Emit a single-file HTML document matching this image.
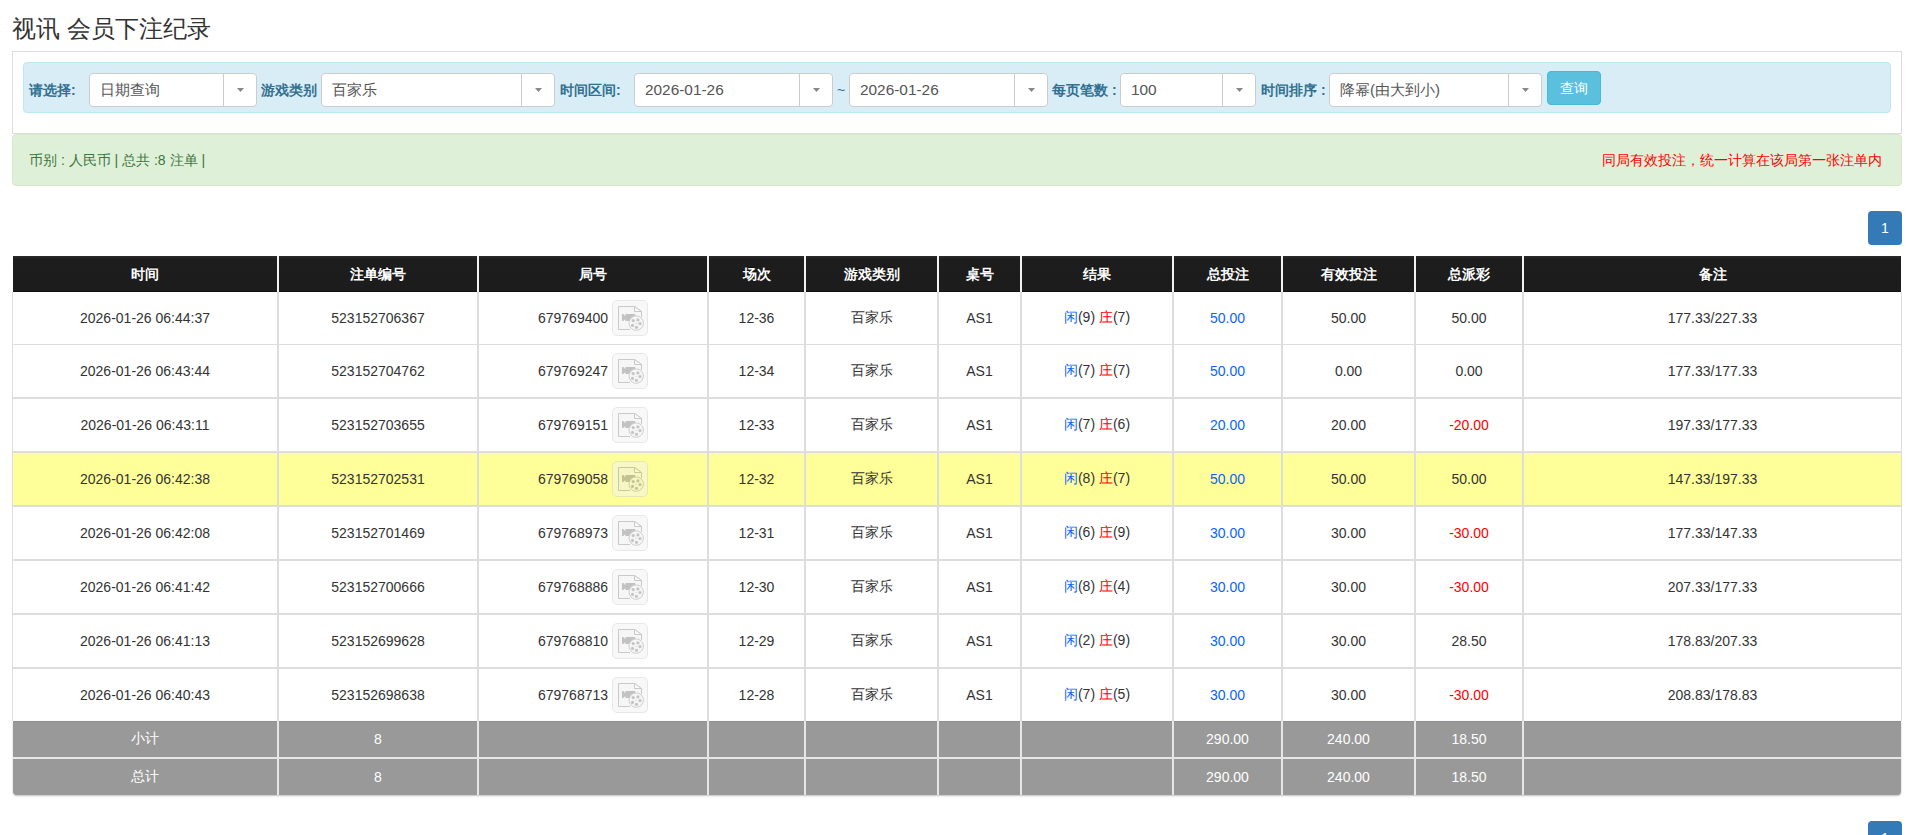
<!DOCTYPE html>
<html><head><meta charset="utf-8"><title>视讯 会员下注纪录</title>
<style>
*{box-sizing:border-box;margin:0;padding:0}
html,body{width:1911px;height:835px;overflow:hidden;background:#fff}
body{font-family:"Liberation Sans",sans-serif;color:#333;font-size:14px;position:relative}
.abs{position:absolute}
.title{left:12px;top:14px;font-size:24px;line-height:30px;color:#333;white-space:nowrap}
.panel{left:12px;top:51px;width:1890px;height:83px;border:1px solid #ddd}
.info{left:23px;top:62px;width:1868px;height:51px;background:#d9edf7;border:1px solid #bce8f1;border-radius:4px}
.lbl{top:80px;font-size:14px;line-height:20px;font-weight:bold;color:#31708f;white-space:nowrap}
.sel{top:73px;height:34px;background:#fff;border:1px solid #ccc;border-radius:4px}
.sel .tx{position:absolute;left:10px;top:0;line-height:32px;font-size:15px;color:#555;white-space:nowrap}
.sel .dv{position:absolute;top:0;bottom:0;width:1px;background:#ccc}
.sel .ct{position:absolute;top:14px;width:7px;height:4px}
.btn{left:1547px;top:71px;width:54px;height:34px;background:#5bc0de;border:1px solid #46b8da;border-radius:4px;color:#fff;font-size:14px;line-height:32px;text-align:center}
.alert{left:12px;top:134px;width:1890px;height:52px;background:#dff0d8;border:1px solid #d6e9c6;border-radius:4px}
.alert .l{position:absolute;left:16px;top:15px;line-height:20px;font-size:14px;color:#3c763d;white-space:nowrap}
.alert .r{position:absolute;right:19px;top:15px;line-height:20px;font-size:14px;color:#f00;white-space:nowrap}
.pg{left:1868px;width:34px;height:34px;background:#337ab7;border-radius:4px;color:#fff;font-size:14px;line-height:34px;text-align:center}
.c{position:absolute;display:flex;align-items:center;justify-content:center;white-space:nowrap;font-size:14px}
.hd{color:#fff;font-weight:bold;text-shadow:0 -1px 0 rgba(0,0,0,.6)}
.blue{color:#0a64ff}.red{color:#f00}
.vb{display:inline-block;width:36px;height:36px;margin-left:4px;border:1px solid #d1d1d1;border-radius:5px;background:#f3f3f3;position:relative;opacity:.5}
.vb svg{position:absolute;left:-1px;top:-1px}
.ft{color:#fff}
</style></head><body>

<div class="abs title">视讯 会员下注纪录</div>
<div class="abs panel"></div>
<div class="abs info"></div>
<div class="abs lbl" style="left:29px">请选择:</div>
<div class="abs lbl" style="left:261px">游戏类别</div>
<div class="abs lbl" style="left:560px">时间区间:</div>
<div class="abs lbl" style="left:1052px">每页笔数 :</div>
<div class="abs lbl" style="left:1261px">时间排序 :</div>
<div class="abs lbl" style="left:837px;font-weight:normal">~</div>
<div class="abs sel" style="left:89px;width:168px"><span class="tx">日期查询</span><span class="dv" style="left:133px"></span><svg class="ct" style="left:147.0px" viewBox="0 0 7 4"><path d="M0 0H7L3.5 4Z" fill="#888"/></svg></div>
<div class="abs sel" style="left:321px;width:234px"><span class="tx">百家乐</span><span class="dv" style="left:199px"></span><svg class="ct" style="left:213.0px" viewBox="0 0 7 4"><path d="M0 0H7L3.5 4Z" fill="#888"/></svg></div>
<div class="abs sel" style="left:634px;width:199px"><span class="tx" style="font-size:15.4px">2026-01-26</span><span class="dv" style="left:164px"></span><svg class="ct" style="left:178.0px" viewBox="0 0 7 4"><path d="M0 0H7L3.5 4Z" fill="#888"/></svg></div>
<div class="abs sel" style="left:849px;width:199px"><span class="tx" style="font-size:15.4px">2026-01-26</span><span class="dv" style="left:164px"></span><svg class="ct" style="left:178.0px" viewBox="0 0 7 4"><path d="M0 0H7L3.5 4Z" fill="#888"/></svg></div>
<div class="abs sel" style="left:1120px;width:136px"><span class="tx" style="font-size:15.4px">100</span><span class="dv" style="left:101px"></span><svg class="ct" style="left:115.0px" viewBox="0 0 7 4"><path d="M0 0H7L3.5 4Z" fill="#888"/></svg></div>
<div class="abs sel" style="left:1329px;width:213px"><span class="tx">降幂(由大到小)</span><span class="dv" style="left:178px"></span><svg class="ct" style="left:192.0px" viewBox="0 0 7 4"><path d="M0 0H7L3.5 4Z" fill="#888"/></svg></div>
<div class="abs btn">查询</div>
<div class="abs alert"><span class="l">币别 : 人民币 | 总共 :8 注单 |</span><span class="r">同局有效投注，统一计算在该局第一张注单内</span></div>
<div class="abs pg" style="top:211px">1</div>
<div class="abs" style="left:12px;top:292px;width:1890px;height:429px;border-left:1px solid #ddd;border-right:1px solid #ddd"></div>
<div class="abs" style="left:13px;top:256px;width:1888px;height:36px;background:linear-gradient(#2c2c2c 0,#262626 1px,#1d1d1d 3px,#1c1c1c 100%);border-bottom:1px solid #101010"></div>
<div class="abs" style="left:13px;top:453px;width:1888px;height:52px;background:#ffff99"></div>
<div class="abs" style="left:13px;top:344px;width:1888px;height:1px;background:#ddd"></div>
<div class="abs" style="left:13px;top:397px;width:1888px;height:2px;background:#ddd"></div>
<div class="abs" style="left:13px;top:451px;width:1888px;height:2px;background:#ddd"></div>
<div class="abs" style="left:13px;top:505px;width:1888px;height:2px;background:#ddd"></div>
<div class="abs" style="left:13px;top:559px;width:1888px;height:2px;background:#ddd"></div>
<div class="abs" style="left:13px;top:613px;width:1888px;height:2px;background:#ddd"></div>
<div class="abs" style="left:13px;top:667px;width:1888px;height:2px;background:#ddd"></div>
<div class="abs" style="left:277px;top:256px;width:2px;height:36px;background:#f2f2f2"></div>
<div class="abs" style="left:277px;top:292px;width:2px;height:429px;background:#ddd"></div>
<div class="abs" style="left:477px;top:256px;width:2px;height:36px;background:#f2f2f2"></div>
<div class="abs" style="left:477px;top:292px;width:2px;height:429px;background:#ddd"></div>
<div class="abs" style="left:707px;top:256px;width:2px;height:36px;background:#f2f2f2"></div>
<div class="abs" style="left:707px;top:292px;width:2px;height:429px;background:#ddd"></div>
<div class="abs" style="left:804px;top:256px;width:2px;height:36px;background:#f2f2f2"></div>
<div class="abs" style="left:804px;top:292px;width:2px;height:429px;background:#ddd"></div>
<div class="abs" style="left:937px;top:256px;width:2px;height:36px;background:#f2f2f2"></div>
<div class="abs" style="left:937px;top:292px;width:2px;height:429px;background:#ddd"></div>
<div class="abs" style="left:1020px;top:256px;width:2px;height:36px;background:#f2f2f2"></div>
<div class="abs" style="left:1020px;top:292px;width:2px;height:429px;background:#ddd"></div>
<div class="abs" style="left:1172px;top:256px;width:2px;height:36px;background:#f2f2f2"></div>
<div class="abs" style="left:1172px;top:292px;width:2px;height:429px;background:#ddd"></div>
<div class="abs" style="left:1281px;top:256px;width:2px;height:36px;background:#f2f2f2"></div>
<div class="abs" style="left:1281px;top:292px;width:2px;height:429px;background:#ddd"></div>
<div class="abs" style="left:1414px;top:256px;width:2px;height:36px;background:#f2f2f2"></div>
<div class="abs" style="left:1414px;top:292px;width:2px;height:429px;background:#ddd"></div>
<div class="abs" style="left:1522px;top:256px;width:2px;height:36px;background:#f2f2f2"></div>
<div class="abs" style="left:1522px;top:292px;width:2px;height:429px;background:#ddd"></div>
<div class="abs" style="left:13px;top:721px;width:1888px;height:74px;background:#999;border-radius:0 0 4px 4px;box-shadow:0 1px 2px rgba(0,0,0,.25)"></div>
<div class="abs" style="left:13px;top:721px;width:1888px;height:1px;background:#8f8f8f"></div>
<div class="abs" style="left:13px;top:757px;width:1888px;height:2px;background:#e6e6e6"></div>
<div class="abs" style="left:277px;top:721px;width:2px;height:74px;background:#e6e6e6"></div>
<div class="abs" style="left:477px;top:721px;width:2px;height:74px;background:#e6e6e6"></div>
<div class="abs" style="left:707px;top:721px;width:2px;height:74px;background:#e6e6e6"></div>
<div class="abs" style="left:804px;top:721px;width:2px;height:74px;background:#e6e6e6"></div>
<div class="abs" style="left:937px;top:721px;width:2px;height:74px;background:#e6e6e6"></div>
<div class="abs" style="left:1020px;top:721px;width:2px;height:74px;background:#e6e6e6"></div>
<div class="abs" style="left:1172px;top:721px;width:2px;height:74px;background:#e6e6e6"></div>
<div class="abs" style="left:1281px;top:721px;width:2px;height:74px;background:#e6e6e6"></div>
<div class="abs" style="left:1414px;top:721px;width:2px;height:74px;background:#e6e6e6"></div>
<div class="abs" style="left:1522px;top:721px;width:2px;height:74px;background:#e6e6e6"></div>
<div class="c hd" style="left:13px;top:257px;width:264px;height:36px">时间</div>
<div class="c hd" style="left:279px;top:257px;width:198px;height:36px">注单编号</div>
<div class="c hd" style="left:479px;top:257px;width:228px;height:36px">局号</div>
<div class="c hd" style="left:709px;top:257px;width:95px;height:36px">场次</div>
<div class="c hd" style="left:806px;top:257px;width:131px;height:36px">游戏类别</div>
<div class="c hd" style="left:939px;top:257px;width:81px;height:36px">桌号</div>
<div class="c hd" style="left:1022px;top:257px;width:150px;height:36px">结果</div>
<div class="c hd" style="left:1174px;top:257px;width:107px;height:36px">总投注</div>
<div class="c hd" style="left:1283px;top:257px;width:131px;height:36px">有效投注</div>
<div class="c hd" style="left:1416px;top:257px;width:106px;height:36px">总派彩</div>
<div class="c hd" style="left:1524px;top:257px;width:377px;height:36px">备注</div>
<div class="c" style="left:13px;top:292px;width:264px;height:52px"><span>2026-01-26 06:44:37</span></div>
<div class="c" style="left:279px;top:292px;width:198px;height:52px"><span>523152706367</span></div>
<div class="c" style="left:479px;top:292px;width:228px;height:52px">679769400<span class="vb"><svg width="36" height="36" viewBox="0 0 36 36"><path d="M6.5 6.5H22.5L29.5 11.5V29.5H6.5Z" fill="#efefef"/><path d="M18 29.5H6.5V6.5H22.5L29.5 11.5V17" fill="none" stroke="#959595" stroke-width="1"/><path d="M22.5 6.5V11.5H29.5Z" fill="#fbfbfb" stroke="#959595" stroke-width="1" stroke-linejoin="round"/><path d="M10 14H11.2L13.4 16.2V14H23.2V21H13.4V19L11.2 21H10Z" fill="#878787"/><circle cx="24.2" cy="23.1" r="7.2" fill="#efefef" stroke="#9f9f9f" stroke-width="1"/><g fill="#8d8d8d"><circle cx="21.2" cy="20.6" r="1.6"/><circle cx="25.9" cy="19.9" r="1.6"/><circle cx="28" cy="23.6" r="1.6"/><circle cx="24.5" cy="27.3" r="1.6"/><circle cx="20.5" cy="25.4" r="1.6"/><circle cx="24" cy="23.3" r="0.6"/></g></svg></span></div>
<div class="c" style="left:709px;top:292px;width:95px;height:52px"><span>12-36</span></div>
<div class="c" style="left:806px;top:292px;width:131px;height:52px"><span>百家乐</span></div>
<div class="c" style="left:939px;top:292px;width:81px;height:52px"><span>AS1</span></div>
<div class="c" style="left:1022px;top:292px;width:150px;height:52px"><span><span class="blue">闲</span>(9) <span class="red">庄</span>(7)</span></div>
<div class="c" style="left:1174px;top:292px;width:107px;height:52px"><span><span class="blue">50.00</span></span></div>
<div class="c" style="left:1283px;top:292px;width:131px;height:52px"><span>50.00</span></div>
<div class="c" style="left:1416px;top:292px;width:106px;height:52px"><span>50.00</span></div>
<div class="c" style="left:1524px;top:292px;width:377px;height:52px"><span>177.33/227.33</span></div>
<div class="c" style="left:13px;top:345px;width:264px;height:52px"><span>2026-01-26 06:43:44</span></div>
<div class="c" style="left:279px;top:345px;width:198px;height:52px"><span>523152704762</span></div>
<div class="c" style="left:479px;top:345px;width:228px;height:52px">679769247<span class="vb"><svg width="36" height="36" viewBox="0 0 36 36"><path d="M6.5 6.5H22.5L29.5 11.5V29.5H6.5Z" fill="#efefef"/><path d="M18 29.5H6.5V6.5H22.5L29.5 11.5V17" fill="none" stroke="#959595" stroke-width="1"/><path d="M22.5 6.5V11.5H29.5Z" fill="#fbfbfb" stroke="#959595" stroke-width="1" stroke-linejoin="round"/><path d="M10 14H11.2L13.4 16.2V14H23.2V21H13.4V19L11.2 21H10Z" fill="#878787"/><circle cx="24.2" cy="23.1" r="7.2" fill="#efefef" stroke="#9f9f9f" stroke-width="1"/><g fill="#8d8d8d"><circle cx="21.2" cy="20.6" r="1.6"/><circle cx="25.9" cy="19.9" r="1.6"/><circle cx="28" cy="23.6" r="1.6"/><circle cx="24.5" cy="27.3" r="1.6"/><circle cx="20.5" cy="25.4" r="1.6"/><circle cx="24" cy="23.3" r="0.6"/></g></svg></span></div>
<div class="c" style="left:709px;top:345px;width:95px;height:52px"><span>12-34</span></div>
<div class="c" style="left:806px;top:345px;width:131px;height:52px"><span>百家乐</span></div>
<div class="c" style="left:939px;top:345px;width:81px;height:52px"><span>AS1</span></div>
<div class="c" style="left:1022px;top:345px;width:150px;height:52px"><span><span class="blue">闲</span>(7) <span class="red">庄</span>(7)</span></div>
<div class="c" style="left:1174px;top:345px;width:107px;height:52px"><span><span class="blue">50.00</span></span></div>
<div class="c" style="left:1283px;top:345px;width:131px;height:52px"><span>0.00</span></div>
<div class="c" style="left:1416px;top:345px;width:106px;height:52px"><span>0.00</span></div>
<div class="c" style="left:1524px;top:345px;width:377px;height:52px"><span>177.33/177.33</span></div>
<div class="c" style="left:13px;top:399px;width:264px;height:52px"><span>2026-01-26 06:43:11</span></div>
<div class="c" style="left:279px;top:399px;width:198px;height:52px"><span>523152703655</span></div>
<div class="c" style="left:479px;top:399px;width:228px;height:52px">679769151<span class="vb"><svg width="36" height="36" viewBox="0 0 36 36"><path d="M6.5 6.5H22.5L29.5 11.5V29.5H6.5Z" fill="#efefef"/><path d="M18 29.5H6.5V6.5H22.5L29.5 11.5V17" fill="none" stroke="#959595" stroke-width="1"/><path d="M22.5 6.5V11.5H29.5Z" fill="#fbfbfb" stroke="#959595" stroke-width="1" stroke-linejoin="round"/><path d="M10 14H11.2L13.4 16.2V14H23.2V21H13.4V19L11.2 21H10Z" fill="#878787"/><circle cx="24.2" cy="23.1" r="7.2" fill="#efefef" stroke="#9f9f9f" stroke-width="1"/><g fill="#8d8d8d"><circle cx="21.2" cy="20.6" r="1.6"/><circle cx="25.9" cy="19.9" r="1.6"/><circle cx="28" cy="23.6" r="1.6"/><circle cx="24.5" cy="27.3" r="1.6"/><circle cx="20.5" cy="25.4" r="1.6"/><circle cx="24" cy="23.3" r="0.6"/></g></svg></span></div>
<div class="c" style="left:709px;top:399px;width:95px;height:52px"><span>12-33</span></div>
<div class="c" style="left:806px;top:399px;width:131px;height:52px"><span>百家乐</span></div>
<div class="c" style="left:939px;top:399px;width:81px;height:52px"><span>AS1</span></div>
<div class="c" style="left:1022px;top:399px;width:150px;height:52px"><span><span class="blue">闲</span>(7) <span class="red">庄</span>(6)</span></div>
<div class="c" style="left:1174px;top:399px;width:107px;height:52px"><span><span class="blue">20.00</span></span></div>
<div class="c" style="left:1283px;top:399px;width:131px;height:52px"><span>20.00</span></div>
<div class="c" style="left:1416px;top:399px;width:106px;height:52px"><span><span class="red">-20.00</span></span></div>
<div class="c" style="left:1524px;top:399px;width:377px;height:52px"><span>197.33/177.33</span></div>
<div class="c" style="left:13px;top:453px;width:264px;height:52px"><span>2026-01-26 06:42:38</span></div>
<div class="c" style="left:279px;top:453px;width:198px;height:52px"><span>523152702531</span></div>
<div class="c" style="left:479px;top:453px;width:228px;height:52px">679769058<span class="vb"><svg width="36" height="36" viewBox="0 0 36 36"><path d="M6.5 6.5H22.5L29.5 11.5V29.5H6.5Z" fill="#efefef"/><path d="M18 29.5H6.5V6.5H22.5L29.5 11.5V17" fill="none" stroke="#959595" stroke-width="1"/><path d="M22.5 6.5V11.5H29.5Z" fill="#fbfbfb" stroke="#959595" stroke-width="1" stroke-linejoin="round"/><path d="M10 14H11.2L13.4 16.2V14H23.2V21H13.4V19L11.2 21H10Z" fill="#878787"/><circle cx="24.2" cy="23.1" r="7.2" fill="#efefef" stroke="#9f9f9f" stroke-width="1"/><g fill="#8d8d8d"><circle cx="21.2" cy="20.6" r="1.6"/><circle cx="25.9" cy="19.9" r="1.6"/><circle cx="28" cy="23.6" r="1.6"/><circle cx="24.5" cy="27.3" r="1.6"/><circle cx="20.5" cy="25.4" r="1.6"/><circle cx="24" cy="23.3" r="0.6"/></g></svg></span></div>
<div class="c" style="left:709px;top:453px;width:95px;height:52px"><span>12-32</span></div>
<div class="c" style="left:806px;top:453px;width:131px;height:52px"><span>百家乐</span></div>
<div class="c" style="left:939px;top:453px;width:81px;height:52px"><span>AS1</span></div>
<div class="c" style="left:1022px;top:453px;width:150px;height:52px"><span><span class="blue">闲</span>(8) <span class="red">庄</span>(7)</span></div>
<div class="c" style="left:1174px;top:453px;width:107px;height:52px"><span><span class="blue">50.00</span></span></div>
<div class="c" style="left:1283px;top:453px;width:131px;height:52px"><span>50.00</span></div>
<div class="c" style="left:1416px;top:453px;width:106px;height:52px"><span>50.00</span></div>
<div class="c" style="left:1524px;top:453px;width:377px;height:52px"><span>147.33/197.33</span></div>
<div class="c" style="left:13px;top:507px;width:264px;height:52px"><span>2026-01-26 06:42:08</span></div>
<div class="c" style="left:279px;top:507px;width:198px;height:52px"><span>523152701469</span></div>
<div class="c" style="left:479px;top:507px;width:228px;height:52px">679768973<span class="vb"><svg width="36" height="36" viewBox="0 0 36 36"><path d="M6.5 6.5H22.5L29.5 11.5V29.5H6.5Z" fill="#efefef"/><path d="M18 29.5H6.5V6.5H22.5L29.5 11.5V17" fill="none" stroke="#959595" stroke-width="1"/><path d="M22.5 6.5V11.5H29.5Z" fill="#fbfbfb" stroke="#959595" stroke-width="1" stroke-linejoin="round"/><path d="M10 14H11.2L13.4 16.2V14H23.2V21H13.4V19L11.2 21H10Z" fill="#878787"/><circle cx="24.2" cy="23.1" r="7.2" fill="#efefef" stroke="#9f9f9f" stroke-width="1"/><g fill="#8d8d8d"><circle cx="21.2" cy="20.6" r="1.6"/><circle cx="25.9" cy="19.9" r="1.6"/><circle cx="28" cy="23.6" r="1.6"/><circle cx="24.5" cy="27.3" r="1.6"/><circle cx="20.5" cy="25.4" r="1.6"/><circle cx="24" cy="23.3" r="0.6"/></g></svg></span></div>
<div class="c" style="left:709px;top:507px;width:95px;height:52px"><span>12-31</span></div>
<div class="c" style="left:806px;top:507px;width:131px;height:52px"><span>百家乐</span></div>
<div class="c" style="left:939px;top:507px;width:81px;height:52px"><span>AS1</span></div>
<div class="c" style="left:1022px;top:507px;width:150px;height:52px"><span><span class="blue">闲</span>(6) <span class="red">庄</span>(9)</span></div>
<div class="c" style="left:1174px;top:507px;width:107px;height:52px"><span><span class="blue">30.00</span></span></div>
<div class="c" style="left:1283px;top:507px;width:131px;height:52px"><span>30.00</span></div>
<div class="c" style="left:1416px;top:507px;width:106px;height:52px"><span><span class="red">-30.00</span></span></div>
<div class="c" style="left:1524px;top:507px;width:377px;height:52px"><span>177.33/147.33</span></div>
<div class="c" style="left:13px;top:561px;width:264px;height:52px"><span>2026-01-26 06:41:42</span></div>
<div class="c" style="left:279px;top:561px;width:198px;height:52px"><span>523152700666</span></div>
<div class="c" style="left:479px;top:561px;width:228px;height:52px">679768886<span class="vb"><svg width="36" height="36" viewBox="0 0 36 36"><path d="M6.5 6.5H22.5L29.5 11.5V29.5H6.5Z" fill="#efefef"/><path d="M18 29.5H6.5V6.5H22.5L29.5 11.5V17" fill="none" stroke="#959595" stroke-width="1"/><path d="M22.5 6.5V11.5H29.5Z" fill="#fbfbfb" stroke="#959595" stroke-width="1" stroke-linejoin="round"/><path d="M10 14H11.2L13.4 16.2V14H23.2V21H13.4V19L11.2 21H10Z" fill="#878787"/><circle cx="24.2" cy="23.1" r="7.2" fill="#efefef" stroke="#9f9f9f" stroke-width="1"/><g fill="#8d8d8d"><circle cx="21.2" cy="20.6" r="1.6"/><circle cx="25.9" cy="19.9" r="1.6"/><circle cx="28" cy="23.6" r="1.6"/><circle cx="24.5" cy="27.3" r="1.6"/><circle cx="20.5" cy="25.4" r="1.6"/><circle cx="24" cy="23.3" r="0.6"/></g></svg></span></div>
<div class="c" style="left:709px;top:561px;width:95px;height:52px"><span>12-30</span></div>
<div class="c" style="left:806px;top:561px;width:131px;height:52px"><span>百家乐</span></div>
<div class="c" style="left:939px;top:561px;width:81px;height:52px"><span>AS1</span></div>
<div class="c" style="left:1022px;top:561px;width:150px;height:52px"><span><span class="blue">闲</span>(8) <span class="red">庄</span>(4)</span></div>
<div class="c" style="left:1174px;top:561px;width:107px;height:52px"><span><span class="blue">30.00</span></span></div>
<div class="c" style="left:1283px;top:561px;width:131px;height:52px"><span>30.00</span></div>
<div class="c" style="left:1416px;top:561px;width:106px;height:52px"><span><span class="red">-30.00</span></span></div>
<div class="c" style="left:1524px;top:561px;width:377px;height:52px"><span>207.33/177.33</span></div>
<div class="c" style="left:13px;top:615px;width:264px;height:52px"><span>2026-01-26 06:41:13</span></div>
<div class="c" style="left:279px;top:615px;width:198px;height:52px"><span>523152699628</span></div>
<div class="c" style="left:479px;top:615px;width:228px;height:52px">679768810<span class="vb"><svg width="36" height="36" viewBox="0 0 36 36"><path d="M6.5 6.5H22.5L29.5 11.5V29.5H6.5Z" fill="#efefef"/><path d="M18 29.5H6.5V6.5H22.5L29.5 11.5V17" fill="none" stroke="#959595" stroke-width="1"/><path d="M22.5 6.5V11.5H29.5Z" fill="#fbfbfb" stroke="#959595" stroke-width="1" stroke-linejoin="round"/><path d="M10 14H11.2L13.4 16.2V14H23.2V21H13.4V19L11.2 21H10Z" fill="#878787"/><circle cx="24.2" cy="23.1" r="7.2" fill="#efefef" stroke="#9f9f9f" stroke-width="1"/><g fill="#8d8d8d"><circle cx="21.2" cy="20.6" r="1.6"/><circle cx="25.9" cy="19.9" r="1.6"/><circle cx="28" cy="23.6" r="1.6"/><circle cx="24.5" cy="27.3" r="1.6"/><circle cx="20.5" cy="25.4" r="1.6"/><circle cx="24" cy="23.3" r="0.6"/></g></svg></span></div>
<div class="c" style="left:709px;top:615px;width:95px;height:52px"><span>12-29</span></div>
<div class="c" style="left:806px;top:615px;width:131px;height:52px"><span>百家乐</span></div>
<div class="c" style="left:939px;top:615px;width:81px;height:52px"><span>AS1</span></div>
<div class="c" style="left:1022px;top:615px;width:150px;height:52px"><span><span class="blue">闲</span>(2) <span class="red">庄</span>(9)</span></div>
<div class="c" style="left:1174px;top:615px;width:107px;height:52px"><span><span class="blue">30.00</span></span></div>
<div class="c" style="left:1283px;top:615px;width:131px;height:52px"><span>30.00</span></div>
<div class="c" style="left:1416px;top:615px;width:106px;height:52px"><span>28.50</span></div>
<div class="c" style="left:1524px;top:615px;width:377px;height:52px"><span>178.83/207.33</span></div>
<div class="c" style="left:13px;top:669px;width:264px;height:52px"><span>2026-01-26 06:40:43</span></div>
<div class="c" style="left:279px;top:669px;width:198px;height:52px"><span>523152698638</span></div>
<div class="c" style="left:479px;top:669px;width:228px;height:52px">679768713<span class="vb"><svg width="36" height="36" viewBox="0 0 36 36"><path d="M6.5 6.5H22.5L29.5 11.5V29.5H6.5Z" fill="#efefef"/><path d="M18 29.5H6.5V6.5H22.5L29.5 11.5V17" fill="none" stroke="#959595" stroke-width="1"/><path d="M22.5 6.5V11.5H29.5Z" fill="#fbfbfb" stroke="#959595" stroke-width="1" stroke-linejoin="round"/><path d="M10 14H11.2L13.4 16.2V14H23.2V21H13.4V19L11.2 21H10Z" fill="#878787"/><circle cx="24.2" cy="23.1" r="7.2" fill="#efefef" stroke="#9f9f9f" stroke-width="1"/><g fill="#8d8d8d"><circle cx="21.2" cy="20.6" r="1.6"/><circle cx="25.9" cy="19.9" r="1.6"/><circle cx="28" cy="23.6" r="1.6"/><circle cx="24.5" cy="27.3" r="1.6"/><circle cx="20.5" cy="25.4" r="1.6"/><circle cx="24" cy="23.3" r="0.6"/></g></svg></span></div>
<div class="c" style="left:709px;top:669px;width:95px;height:52px"><span>12-28</span></div>
<div class="c" style="left:806px;top:669px;width:131px;height:52px"><span>百家乐</span></div>
<div class="c" style="left:939px;top:669px;width:81px;height:52px"><span>AS1</span></div>
<div class="c" style="left:1022px;top:669px;width:150px;height:52px"><span><span class="blue">闲</span>(7) <span class="red">庄</span>(5)</span></div>
<div class="c" style="left:1174px;top:669px;width:107px;height:52px"><span><span class="blue">30.00</span></span></div>
<div class="c" style="left:1283px;top:669px;width:131px;height:52px"><span>30.00</span></div>
<div class="c" style="left:1416px;top:669px;width:106px;height:52px"><span><span class="red">-30.00</span></span></div>
<div class="c" style="left:1524px;top:669px;width:377px;height:52px"><span>208.83/178.83</span></div>
<div class="c ft" style="left:13px;top:721px;width:264px;height:36px">小计</div>
<div class="c ft" style="left:279px;top:721px;width:198px;height:36px">8</div>
<div class="c ft" style="left:1174px;top:721px;width:107px;height:36px">290.00</div>
<div class="c ft" style="left:1283px;top:721px;width:131px;height:36px">240.00</div>
<div class="c ft" style="left:1416px;top:721px;width:106px;height:36px">18.50</div>
<div class="c ft" style="left:13px;top:759px;width:264px;height:36px">总计</div>
<div class="c ft" style="left:279px;top:759px;width:198px;height:36px">8</div>
<div class="c ft" style="left:1174px;top:759px;width:107px;height:36px">290.00</div>
<div class="c ft" style="left:1283px;top:759px;width:131px;height:36px">240.00</div>
<div class="c ft" style="left:1416px;top:759px;width:106px;height:36px">18.50</div>
<div class="abs pg" style="top:821px">1</div>
</body></html>
